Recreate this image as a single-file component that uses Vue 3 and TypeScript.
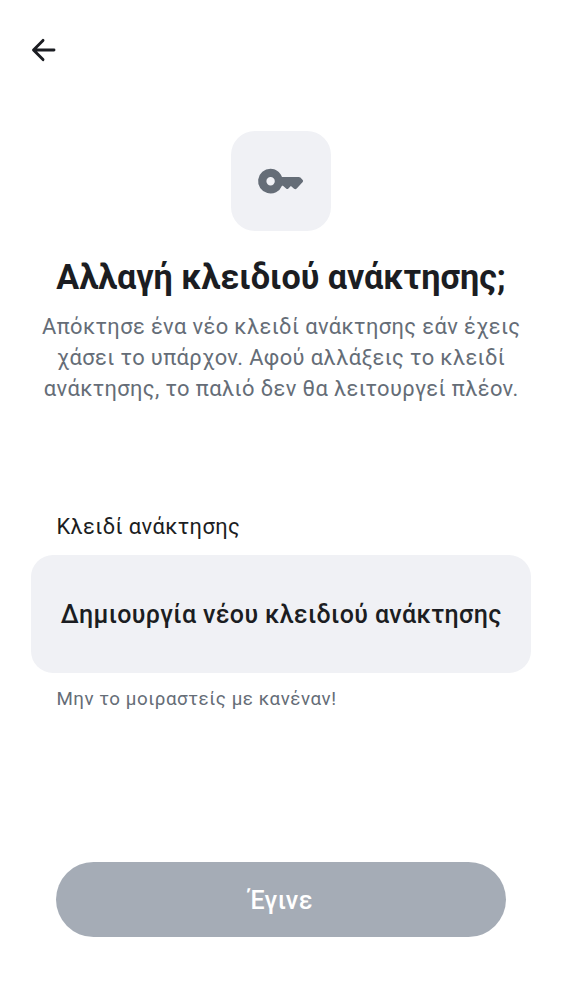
<script setup lang="ts">
const description: string[] = [
  'Απόκτησε ένα νέο κλειδί ανάκτησης εάν έχεις',
  'χάσει το υπάρχον. Αφού αλλάξεις το κλειδί',
  'ανάκτησης, το παλιό δεν θα λειτουργεί πλέον.',
]
</script>

<template>
  <main class="screen">
    <button class="back" aria-label="Πίσω">
      <svg width="30" height="30" viewBox="0 0 30 30"><path d="M26 15H6.500M15 5.400L5.500 15l9.500 9.600" /></svg>
    </button>
    <header class="hero">
      <div class="tile">
        <svg width="50" height="50" viewBox="0 0 50 50"><path fill-rule="evenodd" d="M14.600 12.700c5 0 9.300 3 11.400 8.200h16.700q1 0 1.700.7l2.300 2.500q.9 1 0 2l-6 6.500q-1.300 1.200-2.600.2l-3.200-2.700-2.500 2.300q-1.100 1-2.300 0l-3.200-2.700h-.9a12.400 12.400 0 1 1-11.400-17zM14.600 21.100a4.200 4.200 0 1 0 0 8.400 4.200 4.200 0 0 0 0-8.400z" /></svg>
      </div>
      <h1>Αλλαγή κλειδιού ανάκτησης;</h1>
      <p><span v-for="line in description" :key="line">{{ line }}</span></p>
    </header>
    <section class="field">
      <h2>Κλειδί ανάκτησης</h2>
      <button class="generate"><span>Δημιουργία νέου κλειδιού ανάκτησης</span></button>
      <p class="hint">Μην το μοιραστείς με κανέναν!</p>
    </section>
    <button class="done" disabled><span>Έγινε</span></button>
  </main>
</template>

<style>
body { background: #fff; }
</style>
<style scoped>
.screen { box-sizing: border-box; height: 1000px; padding: 35px 31px 62.600px; display: flex; flex-direction: column; font-family: Roboto, sans-serif; color: #1b1d22; }
button { border: 0; padding: 0; font-family: inherit; }
.back { width: 30px; height: 30px; margin-left: -3px; background: none; color: #1b1d22; }
svg { display: block; fill: currentColor; }
.back svg { fill: none; stroke: currentColor; stroke-width: 2.900; stroke-linecap: round; stroke-linejoin: round; }
.hero { margin-top: 66px; display: flex; flex-direction: column; align-items: center; }
.tile { width: 100px; height: 100px; border-radius: 24px; background: #f0f1f5; color: #656d77; display: grid; place-items: center; }
h1 { margin: 26px 0 0; font-size: 34.150px; line-height: 40px; font-weight: 700; white-space: nowrap; }
.hero p { margin: 14px 0 0; padding-left: .4px; font-size: 21.900px; line-height: 31.200px; letter-spacing: .38px; color: #656d77; text-align: center; white-space: nowrap; }
.hero p span { display: block; }
.field { margin-top: 106px; }
h2 { margin: 0 0 13px 25.400px; font-size: 21.900px; line-height: 31px; font-weight: 400; letter-spacing: .39px; }
.generate { box-sizing: border-box; width: 100%; height: 118px; padding: 1px 0 0 .5px; display: block; border-radius: 22px; background: #f0f1f5; color: #1b1d22; font-size: 25px; font-weight: 500; letter-spacing: .37px; white-space: nowrap; }
.hint { margin: 13px 0 0 25.400px; font-size: 18.750px; line-height: 26px; letter-spacing: .53px; color: #656d77; }
.done { box-sizing: border-box; height: 75px; margin: auto 25px 0; padding-top: 1px; border-radius: 38px; background: #a5acb6; color: #fff; font-size: 25px; font-weight: 500; letter-spacing: .39px; }
</style>
